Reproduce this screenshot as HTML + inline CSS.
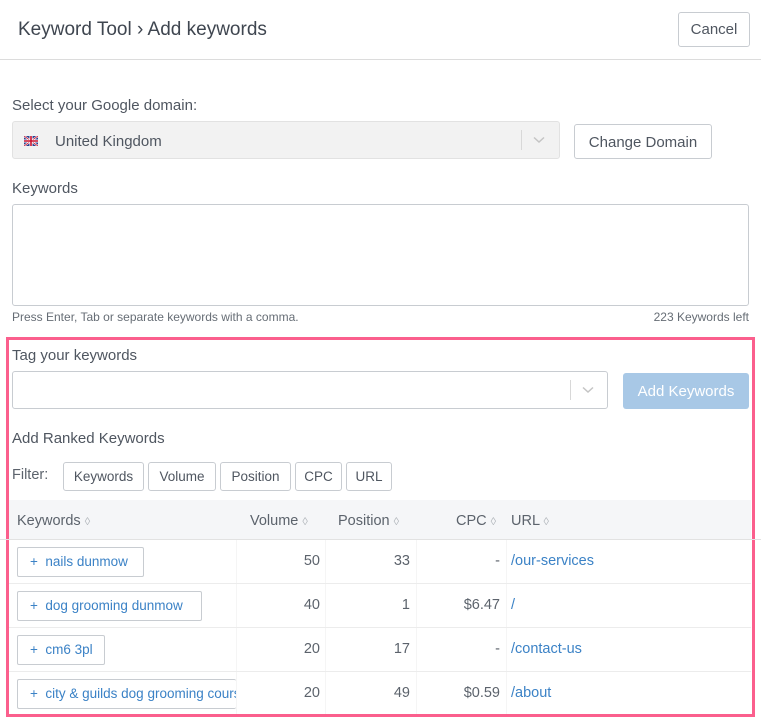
<!DOCTYPE html>
<html><head><meta charset="utf-8"><style>
*{box-sizing:border-box;margin:0;padding:0}
body{width:761px;height:722px;background:#fff;font-family:"Liberation Sans","DejaVu Sans",sans-serif;color:#4f5660;position:relative;overflow:hidden;font-size:14px}
.a{position:absolute}
.btn{position:absolute;border:1px solid #c8ccd1;border-radius:3px;background:#fff;color:#4f5660;text-align:center}
.lbl{position:absolute;font-size:15px;color:#4f5660}
.cell{position:absolute;font-size:14.5px;color:#5c636c}
.kw{position:absolute;left:17px;height:30px;border:1px solid #c8ccd1;border-radius:2px;background:#fff;color:#3b82c6;font-size:13.5px;line-height:28px;padding-left:12px;white-space:nowrap;overflow:hidden}
.link{position:absolute;left:511px;color:#3b82c6;font-size:14.5px}
.hl{position:absolute;left:9px;width:742px;height:1px;background:#ececec}
.vl{position:absolute;width:1px;background:#f5f5f5;top:540px;height:174px}
.s{color:#b0b5ba;font-size:11px}
</style></head><body>
<div class="a" style="left:18px;top:19px;font-size:19px;color:#3f4650">Keyword Tool › Add keywords</div>
<div class="btn" style="left:678px;top:12px;width:72px;height:35px;line-height:33px;font-size:15px">Cancel</div>
<div class="a" style="left:0;top:59px;width:761px;height:1px;background:#dcdcdc"></div>

<div class="lbl" style="left:12px;top:97px">Select your Google domain:</div>
<div class="a" style="left:12px;top:121px;width:548px;height:38px;background:#f2f2f2;border:1px solid #e2e2e2;border-radius:3px"></div>
<svg class="a" style="left:24px;top:136px" width="14" height="10" viewBox="0 0 14 10"><rect width="14" height="10" fill="#2a3f8f"/><path d="M0 0L14 10M14 0L0 10" stroke="#fff" stroke-width="2"/><path d="M0 0L14 10M14 0L0 10" stroke="#c8102e" stroke-width="0.8"/><path d="M7 0V10M0 5H14" stroke="#fff" stroke-width="3"/><path d="M7 0V10M0 5H14" stroke="#c8102e" stroke-width="1.6"/></svg>
<div class="a" style="left:55px;top:133px;font-size:15px;color:#4f5660">United Kingdom</div>
<div class="a" style="left:521px;top:130px;width:1px;height:20px;background:#d8d8d8"></div>
<svg class="a" style="left:533px;top:136px" width="12" height="8"><path d="M1 1.5L6 6L11 1.5" fill="none" stroke="#c4c4c4" stroke-width="1.5"/></svg>
<div class="btn" style="left:574px;top:124px;width:138px;height:35px;line-height:35px;font-size:15px">Change Domain</div>

<div class="lbl" style="left:12px;top:180px">Keywords</div>
<div class="a" style="left:12px;top:204px;width:737px;height:102px;border:1px solid #c8ccd1;border-radius:3px"></div>
<div class="a" style="left:12px;top:310px;font-size:12px;color:#666d75">Press Enter, Tab or separate keywords with a comma.</div>
<div class="a" style="right:12px;top:310px;font-size:12px;color:#666d75">223 Keywords left</div>

<div class="a" style="left:6px;top:337px;width:749px;height:380px;border:3px solid #fb5f8d"></div>
<div class="lbl" style="left:12px;top:347px">Tag your keywords</div>
<div class="a" style="left:12px;top:371px;width:596px;height:38px;border:1px solid #c8ccd1;border-radius:3px"></div>
<div class="a" style="left:570px;top:380px;width:1px;height:20px;background:#d8d8d8"></div>
<svg class="a" style="left:582px;top:386px" width="12" height="8"><path d="M1 1.5L6 6L11 1.5" fill="none" stroke="#c4c4c4" stroke-width="1.5"/></svg>
<div class="a" style="left:623px;top:373px;width:126px;height:36px;background:#a8c8e6;border-radius:3px;color:#fff;font-size:15px;line-height:38px;text-align:center">Add Keywords</div>

<div class="lbl" style="left:12px;top:430px">Add Ranked Keywords</div>
<div class="a" style="left:12px;top:467px;font-size:14.5px;color:#5c636c">Filter:</div>
<div class="btn" style="left:63px;top:462px;width:81px;height:29px;line-height:28px;font-size:13.5px">Keywords</div>
<div class="btn" style="left:148px;top:462px;width:68px;height:29px;line-height:28px;font-size:13.5px">Volume</div>
<div class="btn" style="left:220px;top:462px;width:71px;height:29px;line-height:28px;font-size:13.5px">Position</div>
<div class="btn" style="left:295px;top:462px;width:47px;height:29px;line-height:28px;font-size:13.5px">CPC</div>
<div class="btn" style="left:346px;top:462px;width:46px;height:29px;line-height:28px;font-size:13.5px">URL</div>

<div class="a" style="left:9px;top:500px;width:742px;height:40px;background:#f5f6f8"></div>
<div class="a" style="left:0;top:539px;width:761px;height:1px;background:#e2e2e2"></div>
<div class="cell" style="left:17px;top:513px">Keywords <span class="s">◊</span></div>
<div class="cell" style="left:250px;top:513px">Volume <span class="s">◊</span></div>
<div class="cell" style="left:338px;top:513px">Position <span class="s">◊</span></div>
<div class="cell" style="left:456px;top:513px">CPC <span class="s">◊</span></div>
<div class="cell" style="left:511px;top:513px">URL <span class="s">◊</span></div>

<div class="vl" style="left:236px"></div><div class="vl" style="left:325px"></div><div class="vl" style="left:416px"></div><div class="vl" style="left:506px"></div>
<div class="hl" style="top:583px"></div><div class="hl" style="top:627px"></div><div class="hl" style="top:671px"></div>

<div class="kw" style="top:547px;width:127px">+&nbsp; nails dunmow</div>
<div class="cell" style="right:441px;top:553px">50</div><div class="cell" style="right:351px;top:553px">33</div><div class="cell" style="right:261px;top:553px">-</div><div class="link" style="top:553px">/our-services</div>

<div class="kw" style="top:591px;width:185px">+&nbsp; dog grooming dunmow</div>
<div class="cell" style="right:441px;top:597px">40</div><div class="cell" style="right:351px;top:597px">1</div><div class="cell" style="right:261px;top:597px">$6.47</div><div class="link" style="top:597px">/</div>

<div class="kw" style="top:635px;width:88px">+&nbsp; cm6 3pl</div>
<div class="cell" style="right:441px;top:641px">20</div><div class="cell" style="right:351px;top:641px">17</div><div class="cell" style="right:261px;top:641px">-</div><div class="link" style="top:641px">/contact-us</div>

<div class="kw" style="top:679px;width:219px;border-right:none">+&nbsp; city &amp; guilds dog grooming course</div>
<div class="cell" style="right:441px;top:685px">20</div><div class="cell" style="right:351px;top:685px">49</div><div class="cell" style="right:261px;top:685px">$0.59</div><div class="link" style="top:685px">/about</div>
</body></html>
